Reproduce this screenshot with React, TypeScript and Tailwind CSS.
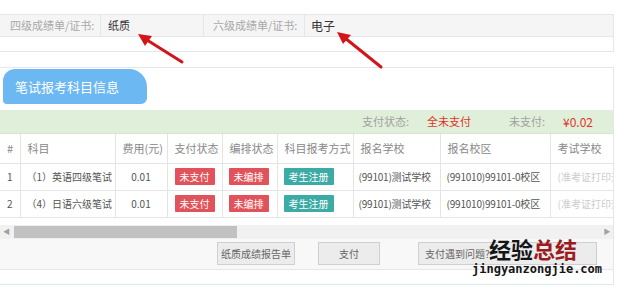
import React from "react";

const cols = [20, 95, 52, 55, 55, 76, 87, 110, 63];

interface Row {
  no: string;
  subject: string;
  fee: string;
  school: string;
  campus: string;
}

const rows: Row[] = [
  { no: "1", subject: "（1）英语四级笔试", fee: "0.01", school: "(99101)测试学校", campus: "(991010)99101-0校区" },
  { no: "2", subject: "（4）日语六级笔试", fee: "0.01", school: "(99101)测试学校", campus: "(991010)99101-0校区" },
];

const Badge: React.FC<{ color: "red" | "teal"; children: React.ReactNode }> = ({ color, children }) => (
  <span
    className={
      "inline-block h-[17px] px-[5px] leading-[17px] text-[10px] text-white rounded-[1px] " +
      (color === "red" ? "bg-[#e2525a]" : "bg-[#3daba5]")
    }
  >
    {children}
  </span>
);

const Arrows: React.FC = () => (
  <svg className="absolute left-0 top-0 pointer-events-none" width="618" height="289">
    <g stroke="#d3151b" strokeWidth="3" strokeLinecap="round">
      <line x1="182" y1="62" x2="147" y2="40" />
      <line x1="381" y1="67" x2="345" y2="38" />
    </g>
    <g fill="#d3151b">
      <polygon points="138,34 152,36 145,46" />
      <polygon points="337,32 351,35 343,44" />
    </g>
  </svg>
);

export default function App() {
  return (
    <div
      className="relative w-[618px] h-[289px] bg-white overflow-hidden text-[11px] text-[#555]"
      style={{ fontFamily: '"Noto Sans CJK SC", "Noto Sans", sans-serif' }}
    >
      {/* top certificate panel */}
      <div className="mt-[14px] w-[614px] border-t border-b border-r border-[#e3e6ea]">
        <div className="flex h-[22px] bg-[#f5f5f5] border-b border-[#e3e6ea] items-center">
          <div className="w-[100px] pl-[10px] text-[#a8a8a8] whitespace-nowrap">四级成绩单/证书:</div>
          <div className="w-[103px] h-full flex items-center pl-[7px] border-l border-[#e3e6ea] text-[#333]">纸质</div>
          <div className="w-[101px] h-full flex items-center pl-[9px] border-l border-[#e3e6ea] text-[#a8a8a8] whitespace-nowrap">六级成绩单/证书:</div>
          <div className="flex-1 h-full flex items-center pl-[6px] border-l border-[#e3e6ea] text-[#333] text-[12px]">电子</div>
        </div>
        <div className="h-[14px]" />
      </div>

      {/* subject panel */}
      <div className="mt-[15px] w-[614px] border-t border-r border-[#e3e6ea]">
        <div className="ml-[3px] mt-[1px] w-[144px] h-[35px] flex items-center pl-[12px] bg-[#6cb8f2] text-white text-[13px] rounded-tl-[12px] rounded-tr-[18px] rounded-br-[6px] rounded-bl-[4px]">
          笔试报考科目信息
        </div>
        <div className="mt-[6px] h-[24px] bg-[#e0efd9] flex items-center justify-end pr-[20px] border-b border-[#d6e6cf]">
          <span className="text-[#a0a0a0]">支付状态:</span>
          <span className="ml-[18px] text-[#e0342c]">全未支付</span>
          <span className="ml-[38px] text-[#a0a0a0]">未支付:</span>
          <span className="ml-[18px] text-[#e0342c] text-[12px]">¥0.02</span>
        </div>

        <table className="table-fixed border-collapse w-[613px] text-[10px]">
          <colgroup>
            {cols.map((w, i) => (
              <col key={i} style={{ width: w }} />
            ))}
          </colgroup>
          <thead>
            <tr className="h-[29px] text-[#888]">
              {["#", "科目", "费用(元)", "支付状态", "编排状态", "科目报考方式", "报名学校", "报名校区", "考试学校"].map((h, i) => (
                <th
                  key={i}
                  className={
                    "font-normal text-left pl-[7px] whitespace-nowrap overflow-hidden text-[11px] border-b border-[#e4e4e4] " +
                    (i > 0 ? "border-l" : "")
                  }
                >
                  {h}
                </th>
              ))}
            </tr>
          </thead>
          <tbody>
            {rows.map((r) => (
              <tr key={r.no} className="h-[27px]">
                <td className="pl-[7px] border-b border-[#e4e4e4]">{r.no}</td>
                <td className="pl-[6px] border-b border-l border-[#e4e4e4] whitespace-nowrap overflow-hidden">{r.subject}</td>
                <td className="text-center border-b border-l border-[#e4e4e4]">{r.fee}</td>
                <td className="pl-[7px] border-b border-l border-[#e4e4e4]">
                  <Badge color="red">未支付</Badge>
                </td>
                <td className="pl-[6px] border-b border-l border-[#e4e4e4]">
                  <Badge color="red">未编排</Badge>
                </td>
                <td className="pl-[6px] border-b border-l border-[#e4e4e4]">
                  <Badge color="teal">考生注册</Badge>
                </td>
                <td className="pl-[5px] border-b border-l border-[#e4e4e4] whitespace-nowrap tracking-[-0.2px]">{r.school}</td>
                <td className="pl-[6px] border-b border-l border-[#e4e4e4] whitespace-nowrap tracking-[-0.2px]">{r.campus}</td>
                <td className="pl-[7px] border-b border-l border-[#e4e4e4] whitespace-nowrap overflow-hidden text-[#ccc]">(准考证打印开</td>
              </tr>
            ))}
          </tbody>
        </table>

        {/* horizontal scrollbar */}
        <div className="mt-[7px] h-[14px] bg-[#f1f1f1] flex items-center">
          <span className="w-[13px] text-center text-[7px] text-[#a0a0a0]">◀</span>
          <div className="ml-[1px] w-[223px] h-[12px] bg-[#c1c1c1]" />
          <div className="flex-1" />
          <span className="w-[12px] text-center text-[7px] text-[#a0a0a0]">▶</span>
        </div>

        {/* actions */}
        <div className="h-[31px] bg-[#f8f8f8] border-b border-[#e6e6e6] flex items-center">
          <button className="ml-[217px] w-[78px] h-[23px] border border-[#cfcfcf] bg-[#ececec] text-[#666] text-[10px] whitespace-nowrap px-0">
            纸质成绩报告单
          </button>
          <button className="ml-[23px] w-[62px] h-[23px] border border-[#cfcfcf] bg-[#ececec] text-[#666] text-[10px]">
            支付
          </button>
          <button className="ml-[38px] w-[179px] h-[23px] border border-[#cfcfcf] bg-[#ececec] text-[#666] text-[10px] text-left pl-[6px] whitespace-nowrap">
            支付遇到问题?
          </button>
        </div>
        <div className="h-[15px] border-b border-[#dceaf0]" />
      </div>

      <Arrows />

      {/* watermark */}
      <div className="absolute left-[489px] top-[237px] text-[22px] font-bold leading-none">
        <span className="text-[#151515]">经验</span>
        <span className="text-[#9b1b1f]">总结</span>
      </div>
      <div
        className="absolute left-[472px] top-[263px] text-[12px] font-bold leading-none text-[#151515]"
        style={{ fontFamily: '"DejaVu Sans Mono", monospace' }}
      >
        jingyanzongjie.com
      </div>
    </div>
  );
}
